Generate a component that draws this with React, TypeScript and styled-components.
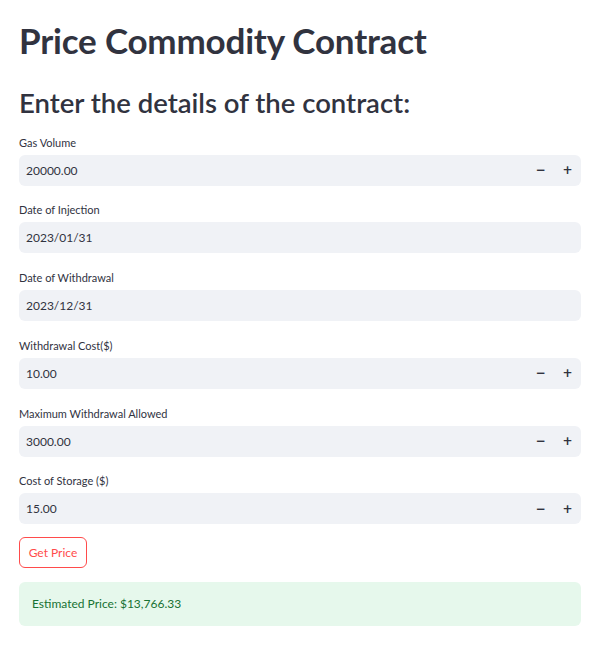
import React from "react";
import styled, { createGlobalStyle } from "styled-components";

const Global = createGlobalStyle`
  html, body { margin: 0; padding: 0; background: #ffffff; }
  body { font-family: Lato, "Noto Sans", sans-serif; color: #31333f; }
  * { box-sizing: border-box; }
`;

const Page = styled.main`
  width: 562px;
  margin-left: 19px;
  display: flex;
  flex-direction: column;
`;

const Title = styled.h1`
  margin: 0;
  padding-top: 20px;
  font-size: 35px;
  line-height: 40px;
  font-weight: 700;
  color: #31333f;
  letter-spacing: -0.2px;
`;

const Subtitle = styled.h2`
  margin: 0;
  padding-top: 27px;
  font-size: 27.5px;
  line-height: 32px;
  font-weight: 600;
  color: #31333f;
`;

const Form = styled.div`
  display: flex;
  flex-direction: column;
  gap: 15.8px;
  margin-top: 14.5px;
`;

const Field = styled.div`
  display: flex;
  flex-direction: column;
  gap: 4px;
`;

const Label = styled.label`
  font-size: 11px;
  line-height: 17px;
  height: 17px;
  color: #31333f;
`;

const InputBox = styled.div`
  height: 31px;
  background: #f0f2f6;
  border-radius: 6px;
  display: flex;
  align-items: center;
  padding-left: 7px;
`;

const Value = styled.span`
  flex: 1;
  font-size: 12px;
  color: #31333f;
`;

const Step = styled.span`
  width: 27px;
  height: 31px;
  display: flex;
  align-items: center;
  justify-content: center;
  font-size: 12px;
  font-weight: 700;
  color: #31333f;
  font-family: "DejaVu Sans", sans-serif;
`;

const Button = styled.button`
  align-self: flex-start;
  margin-top: 12.5px;
  height: 31px;
  width: 68px;
  padding: 0;
  border: 1px solid #ff4b4b;
  border-radius: 6px;
  background: #ffffff;
  color: #ff4b4b;
  font-family: Lato, "Noto Sans", sans-serif;
  font-size: 12px;
`;

const Success = styled.div`
  margin-top: 14px;
  height: 44px;
  border-radius: 6px;
  background: #e6f8ec;
  color: #177233;
  font-size: 12px;
  display: flex;
  align-items: center;
  padding-left: 13px;
`;

type F = { label: string; value: string; stepper?: boolean };

const fields: F[] = [
  { label: "Gas Volume", value: "20000.00", stepper: true },
  { label: "Date of Injection", value: "2023/01/31" },
  { label: "Date of Withdrawal", value: "2023/12/31" },
  { label: "Withdrawal Cost($)", value: "10.00", stepper: true },
  { label: "Maximum Withdrawal Allowed", value: "3000.00", stepper: true },
  { label: "Cost of Storage ($)", value: "15.00", stepper: true },
];

export default function App() {
  return (
    <>
      <Global />
      <Page>
        <Title>Price Commodity Contract</Title>
        <Subtitle>Enter the details of the contract:</Subtitle>
        <Form>
          {fields.map((f) => (
            <Field key={f.label}>
              <Label>{f.label}</Label>
              <InputBox>
                <Value>{f.value}</Value>
                {f.stepper && (
                  <>
                    <Step>−</Step>
                    <Step>+</Step>
                  </>
                )}
              </InputBox>
            </Field>
          ))}
        </Form>
        <Button>Get Price</Button>
        <Success>Estimated Price: $13,766.33</Success>
      </Page>
    </>
  );
}
